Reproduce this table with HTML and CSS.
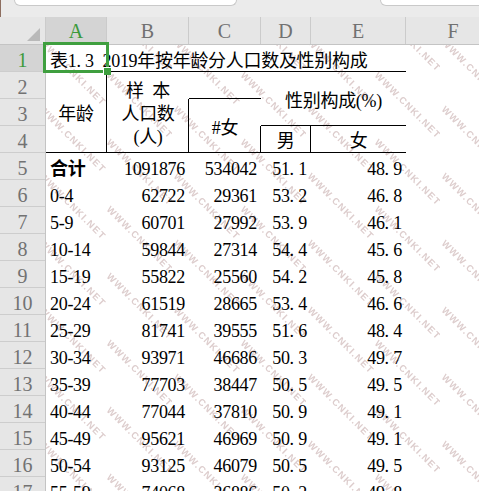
FILE: index.html
```html
<!DOCTYPE html>
<html lang="zh-CN">
<head>
<meta charset="utf-8">
<title>表1.3</title>
<link rel="stylesheet" href="styles.css">
</head>
<body>
<div class="topbar"><div class="namebox"></div><div class="fxbox"></div></div>
<div class="colhead">
  <div class="corner"><span class="tri"></span></div>
  <div class="ch w-a sel">A</div>
  <div class="ch w-b">B</div>
  <div class="ch w-c">C</div>
  <div class="ch w-d">D</div>
  <div class="ch w-e">E</div>
  <div class="ch w-f">F</div>
</div>
<div class="body">
  <div class="rowhead">
    <div class="rh sel">1</div>
    <div class="rh">2</div>
    <div class="rh">3</div>
    <div class="rh">4</div>
    <div class="rh">5</div>
    <div class="rh">6</div>
    <div class="rh">7</div>
    <div class="rh">8</div>
    <div class="rh">9</div>
    <div class="rh">10</div>
    <div class="rh">11</div>
    <div class="rh">12</div>
    <div class="rh">13</div>
    <div class="rh">14</div>
    <div class="rh">15</div>
    <div class="rh">16</div>
    <div class="rh">17</div>
  </div>
  <div class="data">
    <svg class="wm" width="100%" height="100%">
      <defs>
        <pattern id="wmp" patternUnits="userSpaceOnUse" width="134" height="67" x="126" y="59">
          <text class="wmt" x="1" y="6" transform="rotate(45 1 6)">WWW.CNKI.NET</text>
          <text class="wmt" x="68" y="39" transform="rotate(45 68 39)">WWW.CNKI.NET</text>
          <text class="wmt" x="68" y="-28" transform="rotate(45 68 -28)">WWW.CNKI.NET</text>
        </pattern>
      </defs>
      <rect width="100%" height="100%" fill="url(#wmp)"></rect>
    </svg>
    <div class="grid">
      <div class="c r1 title">表1<span class="pt">.</span>3<span class="pt"> </span>2019年按年龄分人口数及性别构成</div>
      <div class="c r1"></div>
      <div class="c r1"></div>
      <div class="c r1"></div>
      <div class="c r1"></div>

      <div class="hd h-age"><div>年龄</div></div>
      <div class="hd h-n"><div>样<span class="pt"> </span>本<br>人口数<br>(人)</div></div>
      <div class="hd h-c2"></div>
      <div class="hd h-sex"><div>性别构成(%)</div></div>
      <div class="hd h-f"><div>#女</div></div>
      <div class="hd h-m"><div>男</div></div>
      <div class="hd h-w"><div>女</div></div>

      <div class="c t b">合计</div><div class="c n">1091876</div><div class="c n">534042</div><div class="c n">51<span class="pt">.</span>1</div><div class="c n">48<span class="pt">.</span>9</div>
      <div class="c t">0-4</div><div class="c n">62722</div><div class="c n">29361</div><div class="c n">53<span class="pt">.</span>2</div><div class="c n">46<span class="pt">.</span>8</div>
      <div class="c t">5-9</div><div class="c n">60701</div><div class="c n">27992</div><div class="c n">53<span class="pt">.</span>9</div><div class="c n">46<span class="pt">.</span>1</div>
      <div class="c t">10-14</div><div class="c n">59844</div><div class="c n">27314</div><div class="c n">54<span class="pt">.</span>4</div><div class="c n">45<span class="pt">.</span>6</div>
      <div class="c t">15-19</div><div class="c n">55822</div><div class="c n">25560</div><div class="c n">54<span class="pt">.</span>2</div><div class="c n">45<span class="pt">.</span>8</div>
      <div class="c t">20-24</div><div class="c n">61519</div><div class="c n">28665</div><div class="c n">53<span class="pt">.</span>4</div><div class="c n">46<span class="pt">.</span>6</div>
      <div class="c t">25-29</div><div class="c n">81741</div><div class="c n">39555</div><div class="c n">51<span class="pt">.</span>6</div><div class="c n">48<span class="pt">.</span>4</div>
      <div class="c t">30-34</div><div class="c n">93971</div><div class="c n">46686</div><div class="c n">50<span class="pt">.</span>3</div><div class="c n">49<span class="pt">.</span>7</div>
      <div class="c t">35-39</div><div class="c n">77703</div><div class="c n">38447</div><div class="c n">50<span class="pt">.</span>5</div><div class="c n">49<span class="pt">.</span>5</div>
      <div class="c t">40-44</div><div class="c n">77044</div><div class="c n">37810</div><div class="c n">50<span class="pt">.</span>9</div><div class="c n">49<span class="pt">.</span>1</div>
      <div class="c t">45-49</div><div class="c n">95621</div><div class="c n">46969</div><div class="c n">50<span class="pt">.</span>9</div><div class="c n">49<span class="pt">.</span>1</div>
      <div class="c t">50-54</div><div class="c n">93125</div><div class="c n">46079</div><div class="c n">50<span class="pt">.</span>5</div><div class="c n">49<span class="pt">.</span>5</div>
      <div class="c t">55-59</div><div class="c n">74068</div><div class="c n">36886</div><div class="c n">50<span class="pt">.</span>2</div><div class="c n">49<span class="pt">.</span>8</div>
    </div>
  </div>
</div>
</body>
</html>
```

FILE: styles.css
```css
* { box-sizing: border-box; }
html, body { margin: 0; padding: 0; }
body {
  width: 479px;
  height: 491px;
  overflow: hidden;
  background: #fff;
  font-family: "Liberation Serif", "Noto Sans CJK SC", serif;
}

/* formula bar strip */
.topbar {
  height: 17px;
  background: #ebebeb;
  display: flex;
  overflow: hidden;
  border-left: 1px solid #8d6e60;
}
.namebox {
  margin-left: 13px;
  width: 223px;
  height: 6px;
  background: #fff;
  border: 1px solid #c9c9c9;
  border-top: 0;
  border-radius: 0 0 6px 6px;
  flex-shrink: 0;
}
.fxbox {
  margin-left: 143px;
  width: 120px;
  height: 6px;
  background: #fff;
  border: 1px solid #c9c9c9;
  border-top: 0;
  border-radius: 0 0 0 6px;
  flex-shrink: 0;
}

/* column header */
.colhead {
  display: flex;
  height: 28px;
  background: #e6e6e6;
  border-bottom: 1px solid #c4c4c4;
  overflow: hidden;
}
.corner {
  width: 46px;
  flex-shrink: 0;
  border-right: 1px solid #cbcbcb;
  display: flex;
  justify-content: flex-end;
  align-items: flex-end;
  padding: 0 5px 3px 0;
}
.tri {
  width: 0;
  height: 0;
  border-left: 13px solid transparent;
  border-bottom: 13px solid #b9b9b9;
}
.ch {
  flex-shrink: 0;
  border-right: 1px solid #cbcbcb;
  display: flex;
  justify-content: center;
  align-items: center;
  padding-top: 2px;
  font-size: 20px;
  color: #717171;
}
.ch.sel { background: #d4d4d4; color: #3b9a3b; }
.w-a { width: 61px; }
.w-b { width: 82px; }
.w-c { width: 72px; }
.w-d { width: 50px; }
.w-e { width: 95px; }
.w-f { width: 94px; border-right: 0; }

/* body */
.body {
  display: flex;
}
.rowhead {
  width: 46px;
  flex-shrink: 0;
  background: #e6e6e6;
  border-right: 1px solid #c4c4c4;
}
.rh {
  height: 27px;
  border-bottom: 1px solid #cdcdcd;
  display: flex;
  justify-content: center;
  align-items: center;
  padding-top: 4px;
  font-size: 20px;
  color: #727272;
}
.rh.sel { background: #d4d4d4; color: #3b9a3b; }

.data {
  flex: 1;
  position: relative;
  isolation: isolate;
}
.wm {
  position: absolute;
  left: 0;
  top: 0;
  z-index: -1;
}
.wmt {
  font-family: "Liberation Sans", sans-serif;
  font-weight: bold;
  font-size: 9.5px;
  letter-spacing: 1.3px;
  fill: #ddcdcd;
}

.grid {
  display: grid;
  grid-template-columns: 61px 82px 72px 50px 95px;
  grid-auto-rows: 27px;
  font-size: 18px;
  letter-spacing: -0.3px;
  line-height: 20px;
  color: #000;
}
.c {
  padding-top: 6px;
  white-space: nowrap;
  min-width: 0;
}
.pt { letter-spacing: 4.2px; }

.r1 { border-bottom: 1px solid #000; }
.title {
  position: relative;
  overflow: visible;
  padding-left: 4px;
}
.title::after {
  content: "";
  position: absolute;
  left: -3px;
  top: -3px;
  right: -2px;
  bottom: -2px;
  border: 3px solid #3f9f3f;
}
.title::before {
  content: "";
  position: absolute;
  left: 57px;
  top: 22px;
  width: 7px;
  height: 7px;
  background: #3f9f3f;
  border-left: 1px solid #fff;
  border-top: 1px solid #fff;
  z-index: 1;
}

.hd {
  display: flex;
  align-items: center;
  justify-content: center;
  text-align: center;
  padding-top: 4px;
  white-space: nowrap;
}
.h-age {
  grid-row: span 3;
  border-right: 1px solid #000;
  border-bottom: 1px solid #000;
}
.h-n {
  grid-row: span 3;
  line-height: 23px;
  border-bottom: 1px solid #000;
}
.h-c2 { border-bottom: 1px solid #000; }
.h-sex {
  grid-column: span 2;
  grid-row: span 2;
  border-bottom: 1px solid #000;
}
.h-f {
  grid-row: span 2;
  border-bottom: 1px solid #000;
  box-shadow: -1px 0 0 #000;
}
.h-m {
  border-right: 1px solid #000;
  border-bottom: 1px solid #000;
  box-shadow: -1px 0 0 #000;
}
.h-w { border-bottom: 1px solid #000; }

.t { padding-left: 4px; }
.b { font-weight: bold; }
.n {
  text-align: right;
  padding-right: 4px;
}
```
